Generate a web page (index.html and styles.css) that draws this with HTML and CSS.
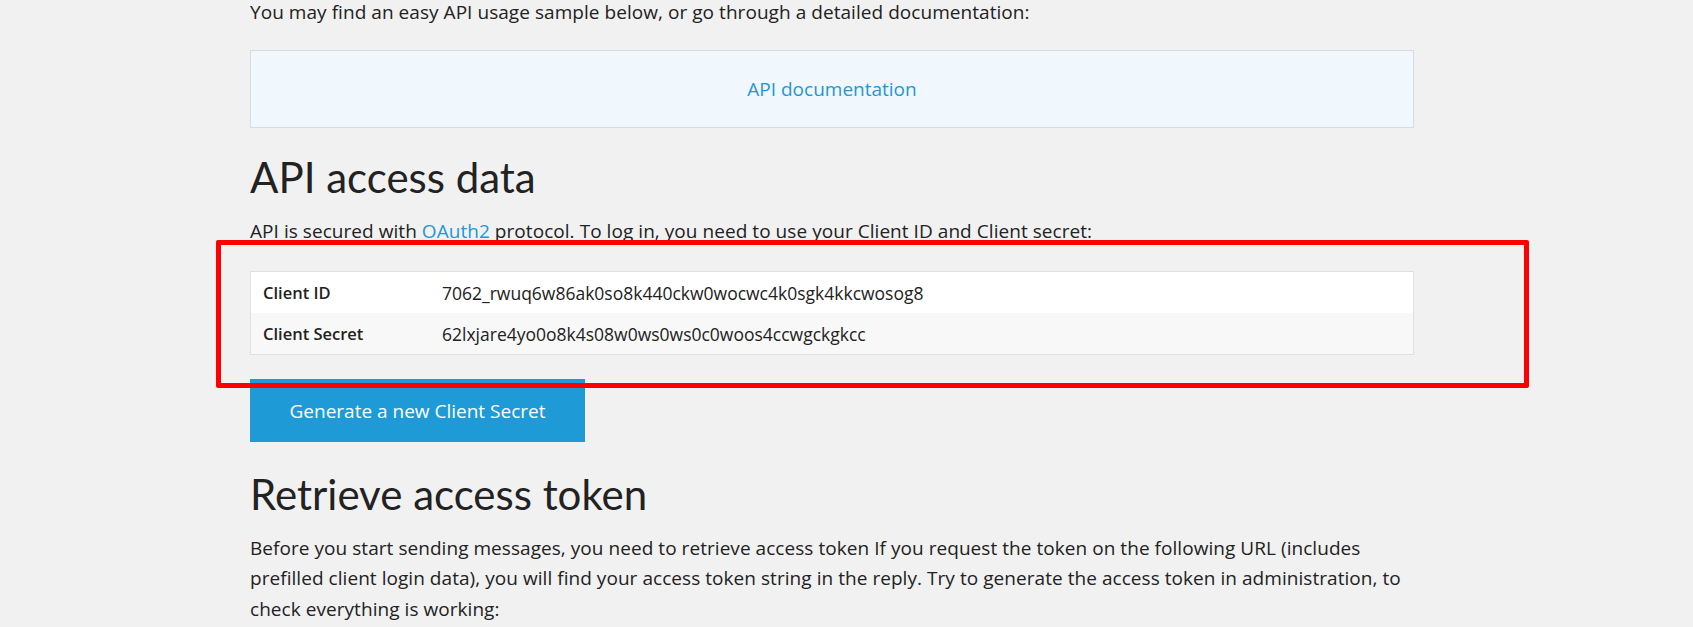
FILE: index.html
```html
<!DOCTYPE html>
<html lang="en">
<head>
<meta charset="utf-8">
<title>API access</title>
<link rel="stylesheet" href="styles.css">
</head>
<body>
<main class="content">
  <p class="text first">You may find an easy API usage sample below, or go through a detailed documentation:</p>
  <div class="doc-box"><a class="link" href="#">API documentation</a></div>

  <h2 class="heading">API access data</h2>
  <p class="text">API is secured with <a class="link" href="#">OAuth2</a> protocol. To log in, you need to use your Client ID and Client secret:</p>

  <div class="creds">
    <div class="cred-row">
      <div class="cred-label">Client ID</div>
      <div class="cred-value">7062_rwuq6w86ak0so8k440ckw0wocwc4k0sgk4kkcwosog8</div>
    </div>
    <div class="cred-row alt">
      <div class="cred-label">Client Secret</div>
      <div class="cred-value">62lxjare4yo0o8k4s08w0ws0ws0c0woos4ccwgckgkcc</div>
    </div>
  </div>

  <button class="btn" type="button">Generate a new Client Secret</button>

  <h2 class="heading second">Retrieve access token</h2>
  <p class="text para">Before you start sending messages, you need to retrieve access token If you request the token on the following URL (includes prefilled client login data), you will find your access token string in the reply. Try to generate the access token in administration, to check everything is working:</p>
</main>
<div class="highlight"></div>
</body>
</html>
```
FILE: styles.css
```css
html, body {
  margin: 0;
  padding: 0;
}
body {
  background: #f1f1f1;
  color: #222;
  font-family: "Open Sans", "Noto Sans", sans-serif;
  overflow: hidden;
  height: 627px;
  position: relative;
}
.content {
  margin-left: 250px;
  width: 1164px;
  display: flex;
  flex-direction: column;
  align-items: flex-start;
}
.text {
  margin: 0;
  font-size: 19px;
  letter-spacing: 0.05px;
  line-height: 30px;
  font-weight: 400;
}
.text.first {
  margin-top: -3px;
}
.link {
  color: #2796d3;
  text-decoration: none;
}
.doc-box {
  margin-top: 23px;
  box-sizing: border-box;
  width: 100%;
  height: 78px;
  border: 1px solid #d6dce0;
  background: #f0f8fd;
  display: flex;
  align-items: center;
  justify-content: center;
  font-size: 19px;
}
.heading {
  margin: 26px 0 0;
  font-family: Lato, "Open Sans", sans-serif;
  font-size: 42px;
  line-height: 46px;
  font-weight: 400;
  color: #222;
}
.heading.second {
  margin-top: 29px;
}
.heading + .text {
  margin-top: 16px;
}
.heading.second + .text {
  margin-top: 16px;
  line-height: 30.3px;
}
.creds {
  margin-top: 25px;
  width: 100%;
  box-sizing: border-box;
  border: 1px solid #e0e0e0;
  background: #fff;
}
.cred-row {
  display: flex;
  align-items: center;
  height: 41px;
  font-size: 17.5px;
}
.cred-row.alt {
  background: #f8f8f8;
}
.cred-label {
  width: 179px;
  padding-left: 12px;
  font-size: 16.5px;
  font-weight: 600;
}
.cred-value {
  font-weight: 400;
}
.btn {
  margin-top: 24px;
  width: 335px;
  height: 63px;
  border: 0;
  border-radius: 0;
  background: #1e9ad6;
  color: #fff;
  font-family: "Open Sans", "Noto Sans", sans-serif;
  font-size: 19px;
  font-weight: 500;
  cursor: pointer;
}
.highlight {
  position: absolute;
  left: 216px;
  top: 240px;
  width: 1313px;
  height: 148px;
  box-sizing: border-box;
  border: 5px solid #f00;
  border-radius: 2px;
  pointer-events: none;
}
```
